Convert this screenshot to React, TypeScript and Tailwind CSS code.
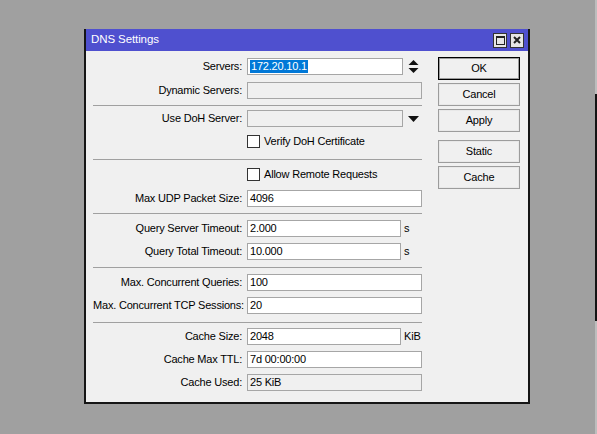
import React from 'react';

const font = { fontFamily: '"Liberation Sans", Arial, sans-serif' };

type RowProps = {
  label: string;
  value?: string;
  width: string;
  disabled?: boolean;
  unit?: string;
  mt: string;
  selected?: boolean;
  trailing?: React.ReactNode;
};

const Row: React.FC<RowProps> = ({ label, value, width, disabled, unit, mt, selected, trailing }) => (
  <div className={`flex items-center h-[17px] ${mt}`}>
    <div className="w-[150px] text-right pr-px whitespace-nowrap">{label}:</div>
    <div
      className={`ml-[4px] h-[17px] ${width} border border-[#a6a6a6] flex items-center pl-[2px] ${
        disabled ? 'bg-[#f0f0f0]' : 'bg-white'
      }`}
    >
      {selected ? (
        <span className="bg-[#0078d7] text-white leading-[13px] px-px">{value}</span>
      ) : (
        <span className="leading-[13px]">{value}</span>
      )}
    </div>
    {unit && <span className="ml-[3px]">{unit}</span>}
    {trailing}
  </div>
);

const Separator: React.FC<{ mt: string }> = ({ mt }) => (
  <div className={`${mt} w-[329px] border-t border-[#a0a0a0]`} />
);

const Check: React.FC<{ label: string; mt: string }> = ({ label, mt }) => (
  <div className={`flex items-center h-[17px] ${mt}`}>
    <div className="w-[150px]" />
    <div className="ml-[4px] w-[13px] h-[13px] bg-white border border-[#333]" />
    <span className="ml-[4px]">{label}</span>
  </div>
);

const Btn: React.FC<{ label: string; def?: boolean; mt: string }> = ({ label, def, mt }) => (
  <button
    className={`${mt} w-[82px] h-[23px] bg-[#f0f0f0] flex items-center justify-center ${
      def
        ? 'border border-black shadow-[inset_0_0_0_1px_#9c9c9c]'
        : 'border border-[#9c9c9c] shadow-[inset_0_0_0_1px_#e8e8e8]'
    }`}
  >
    {label}
  </button>
);

const UpDown = () => (
  <svg className="ml-[5px]" width="11" height="13" viewBox="0 0 11 13">
    <polygon points="5.5,0 10.5,5 0.5,5" fill="#111" />
    <polygon points="0.5,8 10.5,8 5.5,13" fill="#111" />
  </svg>
);

const DropArrow = () => (
  <svg className="ml-[5px]" width="11" height="6" viewBox="0 0 11 6">
    <polygon points="0,0 11,0 5.5,6" fill="#111" />
  </svg>
);

export default function App() {
  return (
    <div
      className="w-[597px] h-[434px] bg-[#a0a0a0] flex text-[11px] tracking-[-0.2px] text-black overflow-hidden"
      style={font}
    >
      <div className="pl-[84px] pt-[29px]">
        <div className="w-[446px] h-[375px] bg-[#f0f0f0] border-x-2 border-b-2 border-[#151515] flex flex-col">
          {/* Title bar */}
          <div className="h-[22px] bg-[#4f50cf] flex items-center pl-[5px] pr-[4px] shrink-0">
            <span className="text-white text-[11.5px] tracking-[-0.1px]">DNS Settings</span>
            <div className="ml-auto flex gap-[3px]">
              <div className="w-[14px] h-[15px] bg-[#e6e6e6] border border-[#333] flex items-center justify-center">
                <div className="w-[9px] h-[9px] border border-[#222] border-t-2" />
              </div>
              <div className="w-[14px] h-[15px] bg-[#e6e6e6] border border-[#333] flex items-center justify-center">
                <svg width="8" height="8" viewBox="0 0 8 8">
                  <path d="M1 1 L7 7 M7 1 L1 7" stroke="#222" strokeWidth="2" />
                </svg>
              </div>
            </div>
          </div>

          {/* Body */}
          <div className="flex">
            <div className="pl-[7px] pt-[7px] w-[350px] flex flex-col">
              <Row label="Servers" value="172.20.10.1" width="w-[156px]" mt="" selected trailing={<UpDown />} />
              <Row label="Dynamic Servers" width="w-[175px]" disabled mt="mt-[7px]" />
              <Separator mt="mt-[6px]" />
              <Row label="Use DoH Server" width="w-[156px]" disabled mt="mt-[4px]" trailing={<DropArrow />} />
              <Check label="Verify DoH Certificate" mt="mt-[6px]" />
              <Separator mt="mt-[9px]" />
              <Check label="Allow Remote Requests" mt="mt-[6px]" />
              <Row label="Max UDP Packet Size" value="4096" width="w-[175px]" mt="mt-[7px]" />
              <Separator mt="mt-[6px]" />
              <Row label="Query Server Timeout" value="2.000" width="w-[154px]" unit="s" mt="mt-[6px]" />
              <Row label="Query Total Timeout" value="10.000" width="w-[154px]" unit="s" mt="mt-[6px]" />
              <Separator mt="mt-[7px]" />
              <Row label="Max. Concurrent Queries" value="100" width="w-[175px]" mt="mt-[6px]" />
              <Row label="Max. Concurrent TCP Sessions" value="20" width="w-[175px]" mt="mt-[6px]" />
              <Separator mt="mt-[8px]" />
              <Row label="Cache Size" value="2048" width="w-[154px]" unit="KiB" mt="mt-[5px]" />
              <Row label="Cache Max TTL" value="7d 00:00:00" width="w-[175px]" mt="mt-[6px]" />
              <Row label="Cache Used" value="25 KiB" width="w-[175px]" disabled mt="mt-[6px]" />
            </div>
            <div className="ml-[2px] pt-[6px] flex flex-col">
              <Btn label="OK" def mt="" />
              <Btn label="Cancel" mt="mt-[3px]" />
              <Btn label="Apply" mt="mt-[3px]" />
              <Btn label="Static" mt="mt-[8px]" />
              <Btn label="Cache" mt="mt-[3px]" />
            </div>
          </div>
        </div>
      </div>

      {/* edge of neighbouring window */}
      <div className="ml-auto w-[2px] h-full flex flex-col">
        <div className="h-[94px] bg-[#bdbdbd]" />
        <div className="h-[227px] bg-[#141414]" />
        <div className="flex-1 bg-[#bdbdbd]" />
      </div>
    </div>
  );
}
